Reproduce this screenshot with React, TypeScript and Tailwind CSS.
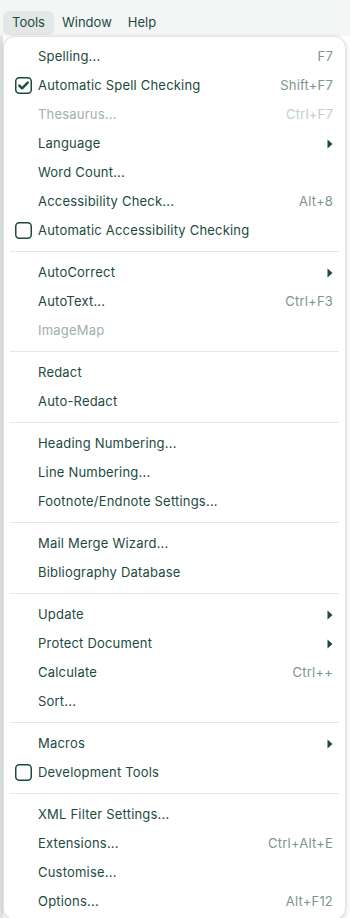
import React from "react";

type Item =
  | { sep: true }
  | {
      sep?: false;
      label: string;
      shortcut?: string;
      sub?: boolean;
      disabled?: boolean;
      check?: "on" | "off";
    };

const items: Item[] = [
  { label: "Spelling...", shortcut: "F7" },
  { label: "Automatic Spell Checking", shortcut: "Shift+F7", check: "on" },
  { label: "Thesaurus...", shortcut: "Ctrl+F7", disabled: true },
  { label: "Language", sub: true },
  { label: "Word Count..." },
  { label: "Accessibility Check...", shortcut: "Alt+8" },
  { label: "Automatic Accessibility Checking", check: "off" },
  { sep: true },
  { label: "AutoCorrect", sub: true },
  { label: "AutoText...", shortcut: "Ctrl+F3" },
  { label: "ImageMap", disabled: true },
  { sep: true },
  { label: "Redact" },
  { label: "Auto-Redact" },
  { sep: true },
  { label: "Heading Numbering..." },
  { label: "Line Numbering..." },
  { label: "Footnote/Endnote Settings..." },
  { sep: true },
  { label: "Mail Merge Wizard..." },
  { label: "Bibliography Database" },
  { sep: true },
  { label: "Update", sub: true },
  { label: "Protect Document", sub: true },
  { label: "Calculate", shortcut: "Ctrl++" },
  { label: "Sort..." },
  { sep: true },
  { label: "Macros", sub: true },
  { label: "Development Tools", check: "off" },
  { sep: true },
  { label: "XML Filter Settings..." },
  { label: "Extensions...", shortcut: "Ctrl+Alt+E" },
  { label: "Customise..." },
  { label: "Options...", shortcut: "Alt+F12" },
];

function Check({ on }: { on: boolean }) {
  return (
    <svg width="17" height="17" viewBox="0 0 17 17" className="block">
      <rect x="0.75" y="0.75" width="15.5" height="15.5" rx="3.5" fill="none" stroke="#1d4a3f" strokeWidth="1.5" />
      {on && (
        <path d="M4.3 8.6 L7.1 11.3 L12.7 5.6" fill="none" stroke="#1d4a3f" strokeWidth="2.4" strokeLinecap="round" strokeLinejoin="round" />
      )}
    </svg>
  );
}

export default function App() {
  return (
    <div
      className="relative w-[350px] h-[918px] overflow-hidden bg-[#e9eded]"
      style={{ fontFamily: "Inter, 'Noto Sans', sans-serif" }}
    >
      <div className="h-[36px] bg-[#f4f6f6] flex items-center pl-[3px] pt-[11px] pb-[1px] text-[13px] text-[#1d4a3f]">
        <div className="h-[24px] px-[9px] rounded-md bg-[#e3e8e7] flex items-center">Tools</div>
        <div className="h-[24px] px-[8px] flex items-center">Window</div>
        <div className="h-[24px] px-[8px] flex items-center">Help</div>
      </div>
      <div className="flex h-full">
        <div className="w-[3px] bg-[#dfe4e3]" />
        <div className="flex-1 bg-white" />
      </div>

      <div className="absolute left-[3px] top-[36px] w-[343px] h-[884px] bg-white rounded-[12px] shadow-[0_1px_4px_rgba(0,0,0,0.18)] border border-[#e1e6e5] px-[5px] pt-[5px]">
        {items.map((it, i) =>
          it.sep ? (
            <div key={i} className="h-[13px] flex items-center px-[1px]">
              <div className="h-px w-full bg-[#e3e7e6]" />
            </div>
          ) : (
            <div
              key={i}
              className={`h-[29px] flex items-center text-[13px] tracking-[0.2px] ${
                it.disabled ? "text-[#9eb0ab]" : "text-[#1d4a3f]"
              }`}
            >
              <div className="w-[29px] pl-[6px] flex items-center">
                {it.check && <Check on={it.check === "on"} />}
              </div>
              <div className="flex-1">{it.label}</div>
              {it.shortcut && (
                <div className={`pr-[7px] ${it.disabled ? "text-[#c2ceca]" : "text-[#7e948e]"}`}>{it.shortcut}</div>
              )}
              {it.sub && (
                <svg width="6" height="10" viewBox="0 0 6 10" className="mr-[7px]">
                  <path d="M0.5 0.5 L5.5 5 L0.5 9.5 Z" fill="#1d4a3f" />
                </svg>
              )}
            </div>
          )
        )}
      </div>
    </div>
  );
}
